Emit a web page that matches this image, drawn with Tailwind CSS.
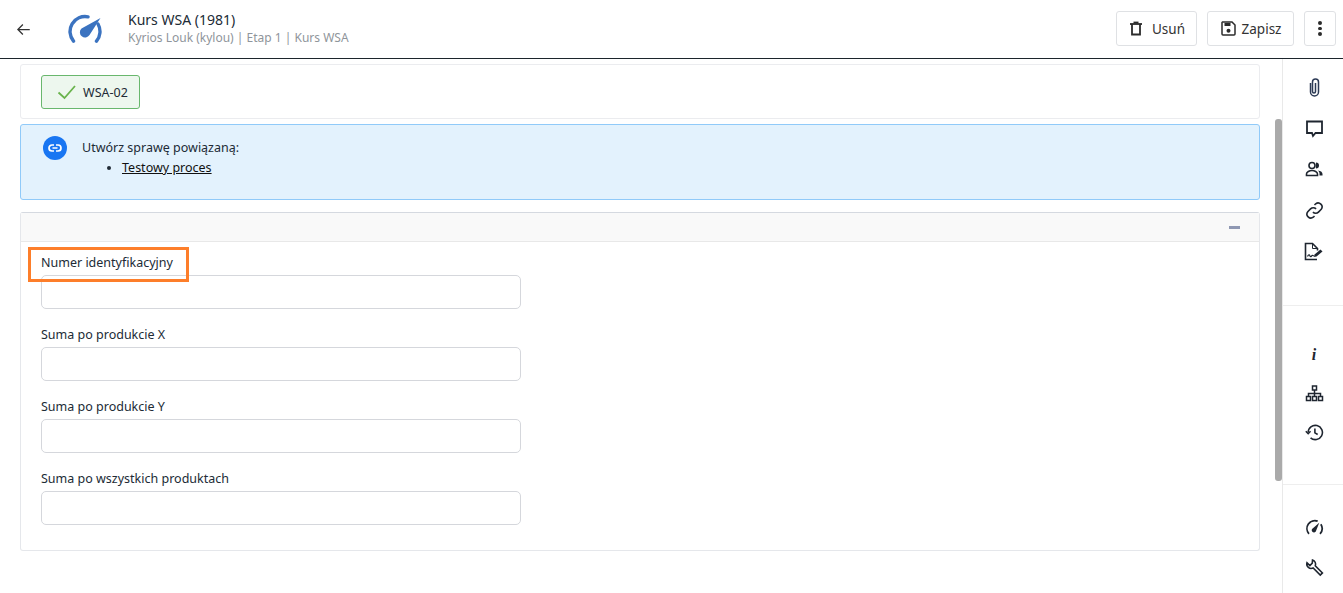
<!DOCTYPE html>
<html lang="pl">
<head>
<meta charset="UTF-8">
<title>Kurs WSA (1981)</title>
<script src="https://cdn.jsdelivr.net/npm/@tailwindcss/browser@4"></script>
</head>
<body class="bg-white font-['Noto_Sans',sans-serif] text-[#212b36] overflow-hidden">
<div class="h-[593px] w-[1343px] flex flex-col overflow-hidden">

  <!-- Top bar -->
  <header class="h-[59px] shrink-0 border-b border-[#1c252c] flex items-center">
    <svg class="ml-[16px] w-[15px] h-[15px]" viewBox="0 0 24 24" fill="none" stroke="#333" stroke-width="2"><path d="M22 12H3M11 4l-8 8 8 8"/></svg>
    <svg class="ml-[37px] w-[34px] h-[30px]" viewBox="0 0 34 30" fill="none">
      <path d="M5.500 27.100A15 15 0 0 1 20 2.800" stroke="#3b73c0" stroke-width="3.400" stroke-linecap="round"/>
      <path d="M30 10A15 15 0 0 1 28.500 27.100" stroke="#3b73c0" stroke-width="3.400" stroke-linecap="round"/>
      <path d="M32.500 4L21.500 21a5.200 5.200 0 1 1-8-6.500z" fill="#3b73c0"/>
    </svg>
    <div class="ml-[26px] flex flex-col">
      <div class="text-[14px] leading-[19px] text-[#212b36] -mt-[2px]">Kurs WSA (1981)</div>
      <div class="text-[12px] leading-[18px] text-[#8f959b]">Kyrios Louk (kylou) | Etap 1 | Kurs WSA</div>
    </div>
    <div class="ml-auto mr-[7px] flex items-center gap-[10px] -mt-[1px]">
      <button class="w-[81px] h-[35px] border border-[#dfe1e4] rounded-[3px] flex items-center justify-center gap-[9px] text-[13.500px] text-[#333]">
        <svg class="w-[14px] h-[15px]" viewBox="0 0 14 15" fill="none" stroke="#2b2b2b" stroke-width="1.800"><path d="M1 3h12" /><path d="M4.500 1.500h5" /><path d="M3 3v10.500h8V3"/></svg>
        <span class="mt-[2px] mr-[-1px]">Usuń</span>
      </button>
      <button class="w-[87px] h-[35px] border border-[#dfe1e4] rounded-[3px] flex items-center justify-center gap-[6px] text-[13.500px] text-[#333]">
        <svg class="w-[15px] h-[15px]" viewBox="0 0 15 15"><path d="M1.500 1h9.500l3 3v9a1 1 0 0 1-1 1H2a1 1 0 0 1-1-1V1.500z" fill="none" stroke="#2b2b2b" stroke-width="1.500"/><rect x="3.500" y="2" width="6" height="3" fill="#2b2b2b"/><circle cx="7.500" cy="9.800" r="2" fill="#2b2b2b"/></svg>
        <span class="mt-[2px] mr-[-1px]">Zapisz</span>
      </button>
      <button class="w-[32px] h-[35px] border border-[#dfe1e4] rounded-[3px] flex flex-col items-center justify-center gap-[2px]">
        <span class="w-[3.500px] h-[3.500px] rounded-full bg-[#2b2b2b]"></span>
        <span class="w-[3.500px] h-[3.500px] rounded-full bg-[#2b2b2b]"></span>
        <span class="w-[3.500px] h-[3.500px] rounded-full bg-[#2b2b2b]"></span>
      </button>
    </div>
  </header>

  <div class="flex flex-1 min-h-0 relative">
    <!-- Content -->
    <main class="w-[1282px] shrink-0 pl-[20px] pr-[22px] pt-[5px]">
      <section class="h-[55px] border border-[#ebecef] rounded-[3px] pl-[20px] pt-[10px]">
        <div class="w-[99px] h-[34px] bg-[#edf7ee] border border-[#69b76d] rounded-[3px] flex items-center pl-[15px] gap-[6px] text-[12.500px] text-[#212b36]">
          <svg class="w-[20px] h-[16px]" viewBox="0 0 20 16" fill="none" stroke="#69b34c" stroke-width="1.800"><path d="M1.500 8.500l6 5.500L18 2"/></svg>
          <span class="mt-[2px]">WSA-02</span>
        </div>
      </section>

      <section class="mt-[5px] h-[76px] bg-[#e3f2fd] border border-[#90caf9] rounded-[3px] flex pl-[22px] pt-[11px]">
        <span class="w-[24px] h-[24px] rounded-full bg-[#1976f2] flex items-center justify-center">
          <svg class="w-[14px] h-[14px]" viewBox="0 0 14 14" fill="none" stroke="white" stroke-width="1.700"><path d="M6 4H4a3 3 0 0 0 0 6h2M8 4h2a3 3 0 0 1 0 6H8M4.500 7h5"/></svg>
        </span>
        <div class="ml-[15px] text-[12.500px] leading-[20px] pt-[2px] text-[#212b36]">
          <div>Utwórz sprawę powiązaną:</div>
          <ul class="list-disc pl-[40px]">
            <li><a class="underline text-[#111]" href="#">Testowy proces</a></li>
          </ul>
        </div>
      </section>

      <section class="mt-[12px] h-[339px] border border-[#e5e7eb] border-t-[#d5d9e0] rounded-[3px]">
        <div class="h-[29px] bg-[#f9f9f9] border-b border-[#e8e8e8] flex items-center justify-end pr-[19px]">
          <span class="w-[11px] h-[3px] bg-[#8f98b3]"></span>
        </div>
        <div class="pl-[20px] pt-[11px] flex flex-col gap-[16px]">
          <label class="block">
            <span class="block text-[12.500px] leading-[20px]">Numer identyfikacyjny</span>
            <input class="block mt-[2px] w-[480px] h-[34px] border border-[#d5d7dc] rounded-[5px] bg-white" type="text">
          </label>
          <label class="block">
            <span class="block text-[12.500px] leading-[20px]">Suma po produkcie X</span>
            <input class="block mt-[2px] w-[480px] h-[34px] border border-[#d5d7dc] rounded-[5px] bg-white" type="text">
          </label>
          <label class="block">
            <span class="block text-[12.500px] leading-[20px]">Suma po produkcie Y</span>
            <input class="block mt-[2px] w-[480px] h-[34px] border border-[#d5d7dc] rounded-[5px] bg-white" type="text">
          </label>
          <label class="block">
            <span class="block text-[12.500px] leading-[20px]">Suma po wszystkich produktach</span>
            <input class="block mt-[2px] w-[480px] h-[34px] border border-[#d5d7dc] rounded-[5px] bg-white" type="text">
          </label>
        </div>
      </section>
    </main>

    <!-- Scrollbar thumb -->
    <div class="absolute left-[1275px] top-[60px] w-[7px] h-[362px] rounded-[3px] bg-[#aaaaaa]"></div>
    <!-- Highlight around the first label -->
    <div class="absolute left-[28px] top-[188px] w-[161px] h-[35px] border-[3px] border-[#fd7e2a]"></div>

    <!-- Right sidebar -->
    <aside class="w-[61px] border-l border-[#e9e9e9] flex flex-col">
      <div class="h-[247px] border-b border-[#eeeeee] flex flex-col items-center pt-[19px] gap-[22px] pl-[2px]">
        <svg class="w-[19px] h-[19px]" viewBox="0 0 19 19" fill="none" stroke="#2c3a55" stroke-width="1.500"><path d="M5.500 5v9a4 4 0 0 0 8 0V4a3 3 0 0 0-6 0v9.500a1 1 0 0 0 3 0V5"/></svg>
        <svg class="w-[19px] h-[19px]" viewBox="0 0 19 19" fill="none" stroke="#1f2630" stroke-width="1.800"><path d="M2 2.500h15v11.500H10.500L8 17l-1-3H2z"/></svg>
        <svg class="w-[19px] h-[19px]" viewBox="0 0 19 19" fill="#1f2630"><circle cx="7" cy="5.500" r="3" fill="none" stroke="#1f2630" stroke-width="1.600"/><path d="M11 2.500a3 3 0 0 1 0 6z"/><path d="M1.500 15.500v-1.500c0-2 3-3.500 5.500-3.500s5.500 1.500 5.500 3.500v1.500z" fill="none" stroke="#1f2630" stroke-width="1.600"/><path d="M13 10.500c2.500.3 4.500 1.500 4.500 3.500v1.500H14.500v-2c0-1-.6-2-1.500-3z"/></svg>
        <svg class="w-[19px] h-[19px]" viewBox="0 0 24 24" fill="none" stroke="#1f2630" stroke-width="2"><path d="M10 14a5 5 0 0 0 7 0l3.500-3.500a5 5 0 0 0-7-7L12 5"/><path d="M14 10a5 5 0 0 0-7 0l-3.500 3.500a5 5 0 0 0 7 7L12 19"/></svg>
        <svg class="w-[20px] h-[19px]" viewBox="0 0 20 19" fill="none" stroke="#1f2630" stroke-width="1.600"><path d="M13 17.500H1.500V1.500h7l5 5v2"/><path d="M8.500 1.500v5h5" stroke-width="1"/><path d="M3.500 14.500c1-2 2-2 2.500-.5s1.500 0 2-.5 1 .5 2 .5" stroke-width="1.200"/><path d="M10.500 12.500l6-5 2 2-6 5-2.500.5z" fill="#1f2630" stroke="none"/></svg>
      </div>
      <div class="h-[179px] border-b border-[#eeeeee] flex flex-col items-center pt-[39px] gap-[20px] pl-[2px]">
        <span class="h-[19px] leading-[19px] font-['Liberation_Serif',serif] italic font-bold text-[16px] text-[#1f2630]">i</span>
        <svg class="w-[19px] h-[19px]" viewBox="0 0 19 19" fill="none" stroke="#1f2630" stroke-width="1.500"><rect x="7.500" y="2" width="4" height="4"/><rect x="1.500" y="12.500" width="4" height="4"/><rect x="7.500" y="12.500" width="4" height="4"/><rect x="13.500" y="12.500" width="4" height="4"/><path d="M9.500 6v6.500M3.500 12.500V9.500h12v3"/></svg>
        <svg class="w-[19px] h-[19px]" viewBox="0 0 24 24" fill="none" stroke="#1f2630" stroke-width="2"><path d="M4 12a9 9 0 1 1 3 6.700"/><path d="M1 10.500l3 3 3-3"/><path d="M12.500 7v5.500l3.500 2"/></svg>
      </div>
      <div class="flex flex-col items-center pt-[33px] gap-[21px] pl-[2px]">
        <svg class="w-[19px] h-[19px]" viewBox="0 0 24 24" fill="none" stroke="#1f2630" stroke-width="2.200"><path d="M5 20a10 10 0 0 1 11-16"/><path d="M20 8a10 10 0 0 1-1 12"/><path d="M18 6l-4 10a2.800 2.800 0 1 1-4-3z" fill="#1f2630" stroke="none"/></svg>
        <svg class="w-[19px] h-[19px]" viewBox="0 0 24 24" fill="none" stroke="#1f2630" stroke-width="2"><path d="M9.500 2.500a5.500 5.500 0 0 1 3.500 7.300l9 9-2.700 2.700-9-9A5.500 5.500 0 0 1 2.500 6l3.700 3.500 3-3z"/></svg>
      </div>
    </aside>
  </div>
</div>
</body>
</html>
